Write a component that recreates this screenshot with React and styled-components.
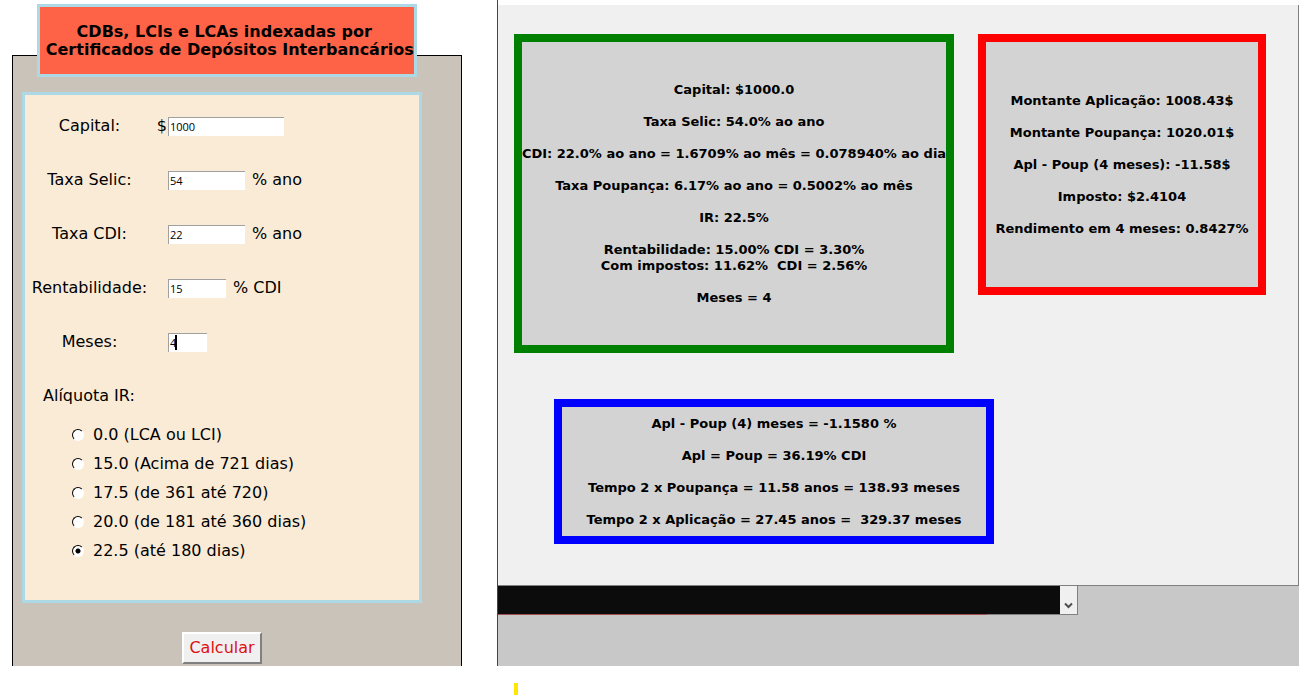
import React, { useState } from "react";
import styled, { createGlobalStyle } from "styled-components";

const GlobalStyle = createGlobalStyle`
  *, *::before, *::after { box-sizing: border-box; }
  body {
    margin: 0;
    background: #ffffff;
    color: #000000;
    font-family: "DejaVu Sans", Verdana, sans-serif;
    font-size: 16px;
    line-height: 20px;
  }
`;

const Page = styled.main`
  display: grid;
  grid-template-columns: 462px minmax(0, 1fr);
  column-gap: 35px;
`;

const FormColumn = styled.form`
  display: flex;
  flex-direction: column;
  padding: 4px 0 0 12px;
`;

const Title = styled.h1`
  position: relative;
  z-index: 1;
  width: 380px;
  margin: 0 0 -22px 25px;
  padding: 16px 0 15px;
  border: 3px solid lightblue;
  background: tomato;
  font-size: 16px;
  line-height: 18px;
  font-weight: bold;
  text-align: center;
  white-space: pre;
`;

const FormPanel = styled.div`
  flex: 1;
  display: flex;
  flex-direction: column;
  align-items: flex-start;
  padding: 36px 39px 2px 9px;
  border: 1px solid #000000;
  border-bottom: 0;
  background: #cac3b9;
`;

const Fields = styled.div`
  width: 100%;
  padding: 4px 0 35px;
  border: 3px solid lightblue;
  background: #faebd7;
`;

const FieldRow = styled.div`
  display: grid;
  grid-template-columns: 129px 14px auto 1fr;
  align-items: center;
  height: 54px;
`;

const FieldLabel = styled.label`
  text-align: center;
`;

const Prefix = styled.span`
  text-align: right;
  padding-right: 1px;
`;

const InputBox = styled.span`
  position: relative;
  display: flex;
`;

const TextInput = styled.input`
  width: ${(p) => p.$width}px;
  height: 19px;
  padding: 0 1px;
  border: 0;
  border-top: 1px solid #a0a0a0;
  border-left: 1px solid #a0a0a0;
  border-radius: 0;
  outline: 0;
  background: #ffffff;
  color: #000000;
  font-family: "Open Sans", sans-serif;
  font-size: 11px;
  line-height: 16px;
`;

const Caret = styled.span`
  position: absolute;
  left: 7px;
  top: 2px;
  width: 2px;
  height: 15px;
  background: #000000;
`;

const Suffix = styled.span`
  padding-left: 7px;
`;

const RateGroup = styled.div`
  display: flex;
  flex-direction: column;
`;

const RateHeading = styled.div`
  padding: 17px 18px 14px;
`;

const RateOption = styled.label`
  display: flex;
  align-items: center;
  gap: 9px;
  height: 29px;
  padding-left: 47px;
`;

const Radio = styled.input`
  appearance: none;
  width: 12px;
  height: 12px;
  margin: 0;
  border: 1px solid;
  border-color: #000000 #ffffff #ffffff #000000;
  border-radius: 50%;
  background: #ffffff;
  &:checked {
    background: radial-gradient(circle at center, #000000 2px, #ffffff 3px);
  }
`;

const CalcButton = styled.button`
  align-self: center;
  margin-top: 29px;
  width: 80px;
  height: 32px;
  padding: 0;
  border: 2px solid;
  border-color: #ffffff #808080 #808080 #ffffff;
  border-radius: 0;
  background: #f0f0f0;
  color: #dd1111;
  font: inherit;
`;

const Desktop = styled.section`
  display: flex;
  flex-direction: column;
  padding-top: 5px;
  border-left: 1px solid #444444;
  background: linear-gradient(#ffffff 5px, #c8c8c8 5px);
`;

const ResultWindow = styled.div`
  padding: 29px 31px 41px 16px;
  border-right: 1px solid #808080;
  border-bottom: 1px solid #808080;
  background: #f0f0f0;
`;

const CardRow = styled.div`
  display: flex;
  align-items: flex-start;
  gap: 24px;
  margin-bottom: 46px;
`;

const Card = styled.div`
  flex: 0 1 ${(p) => p.$width}px;
  max-width: ${(p) => p.$width}px;
  min-height: ${(p) => p.$minHeight}px;
  margin-left: ${(p) => (p.$indent ? "40px" : "0")};
  display: flex;
  flex-direction: column;
  align-items: center;
  justify-content: center;
  gap: 16px;
  overflow: hidden;
  border: 8px solid ${(p) => p.$color};
  background: lightgray;
`;

const ResultLine = styled.p`
  margin: 0;
  flex: none;
  font-size: 13px;
  line-height: 16px;
  font-weight: bold;
  text-align: center;
  white-space: pre;
`;

const ConsoleArea = styled.div`
  flex: 1;
  min-height: 80px;
`;

const Console = styled.div`
  display: flex;
  width: 580px;
  max-width: 100%;
  height: 29px;
  border-right: 1px solid #808080;
  border-bottom: 1px solid #808080;
  background: #0c0c0c;
`;

const ConsoleBody = styled.div`
  flex: 1;
`;

const ScrollDown = styled.button`
  display: flex;
  align-items: flex-end;
  justify-content: center;
  width: 17px;
  padding: 0 0 5px;
  border: 0;
  background: #f0f0f0;
`;

const Underline = styled.div`
  width: 489px;
  max-width: 100%;
  height: 1px;
  margin-top: -1px;
  background: #a05050;
`;

const Footer = styled.footer`
  grid-column: 2;
  padding: 17px 17px 1px;
`;

const Mark = styled.div`
  width: 4px;
  height: 12px;
  background: #ffe600;
`;

const FIELDS = [
  { id: "capital", label: "Capital:", prefix: "$", value: "1000", width: 116 },
  { id: "selic", label: "Taxa Selic:", value: "54", width: 77, suffix: "% ano" },
  { id: "cdi", label: "Taxa CDI:", value: "22", width: 77, suffix: "% ano" },
  { id: "rent", label: "Rentabilidade:", value: "15", width: 58, suffix: "% CDI" },
  { id: "meses", label: "Meses:", value: "4", width: 39, caret: true },
];

const RATES = [
  ["0.0", "0.0 (LCA ou LCI)"],
  ["15.0", "15.0 (Acima de 721 dias)"],
  ["17.5", "17.5 (de 361 até 720)"],
  ["20.0", "20.0 (de 181 até 360 dias)"],
  ["22.5", "22.5 (até 180 dias)"],
];

const SUMMARY = [
  "Capital: $1000.0",
  "Taxa Selic: 54.0% ao ano",
  "CDI: 22.0% ao ano = 1.6709% ao mês = 0.078940% ao dia",
  "Taxa Poupança: 6.17% ao ano = 0.5002% ao mês",
  "IR: 22.5%",
  "Rentabilidade: 15.00% CDI = 3.30%\nCom impostos: 11.62%  CDI = 2.56%",
  "Meses = 4",
];

const AMOUNTS = [
  "Montante Aplicação: 1008.43$",
  "Montante Poupança: 1020.01$",
  "Apl - Poup (4 meses): -11.58$",
  "Imposto: $2.4104",
  "Rendimento em 4 meses: 0.8427%",
];

const COMPARISON = [
  "Apl - Poup (4) meses = -1.1580 %",
  "Apl = Poup = 36.19% CDI",
  "Tempo 2 x Poupança = 11.58 anos = 138.93 meses",
  "Tempo 2 x Aplicação = 27.45 anos =  329.37 meses",
];

function ResultCard({ lines, ...box }) {
  return (
    <Card {...box}>
      {lines.map((line) => (
        <ResultLine key={line}>{line}</ResultLine>
      ))}
    </Card>
  );
}

export default function App() {
  const [rate, setRate] = useState("22.5");

  return (
    <>
      <GlobalStyle />
      <Page>
        <FormColumn onSubmit={(e) => e.preventDefault()}>
          <Title>{"CDBs, LCIs e LCAs indexadas por \n Certificados de Depósitos Interbancários"}</Title>
          <FormPanel>
            <Fields>
              {FIELDS.map((f) => (
                <FieldRow key={f.id}>
                  <FieldLabel htmlFor={f.id}>{f.label}</FieldLabel>
                  <Prefix>{f.prefix}</Prefix>
                  <InputBox>
                    <TextInput id={f.id} type="text" defaultValue={f.value} $width={f.width} />
                    {f.caret && <Caret />}
                  </InputBox>
                  <Suffix>{f.suffix}</Suffix>
                </FieldRow>
              ))}
              <RateGroup role="radiogroup" aria-labelledby="rate-heading">
                <RateHeading id="rate-heading">Alíquota IR:</RateHeading>
                {RATES.map(([value, text]) => (
                  <RateOption key={value}>
                    <Radio
                      type="radio"
                      name="rate"
                      value={value}
                      checked={rate === value}
                      onChange={() => setRate(value)}
                    />
                    {text}
                  </RateOption>
                ))}
              </RateGroup>
            </Fields>
            <CalcButton type="submit">Calcular</CalcButton>
          </FormPanel>
        </FormColumn>

        <Desktop>
          <ResultWindow>
            <CardRow>
              <ResultCard lines={SUMMARY} $width={440} $minHeight={319} $color="green" />
              <ResultCard lines={AMOUNTS} $width={288} $minHeight={261} $color="red" />
            </CardRow>
            <ResultCard lines={COMPARISON} $width={440} $minHeight={145} $color="blue" $indent />
          </ResultWindow>
          <ConsoleArea>
            <Console>
              <ConsoleBody />
              <ScrollDown type="button" aria-label="Rolar para baixo">
                <svg width="9" height="7" viewBox="0 0 9 7" fill="none" stroke="#505050" strokeWidth="2">
                  <path d="M1 1.5 L4.5 5 L8 1.5" />
                </svg>
              </ScrollDown>
            </Console>
            <Underline />
          </ConsoleArea>
        </Desktop>

        <Footer>
          <Mark />
        </Footer>
      </Page>
    </>
  );
}
